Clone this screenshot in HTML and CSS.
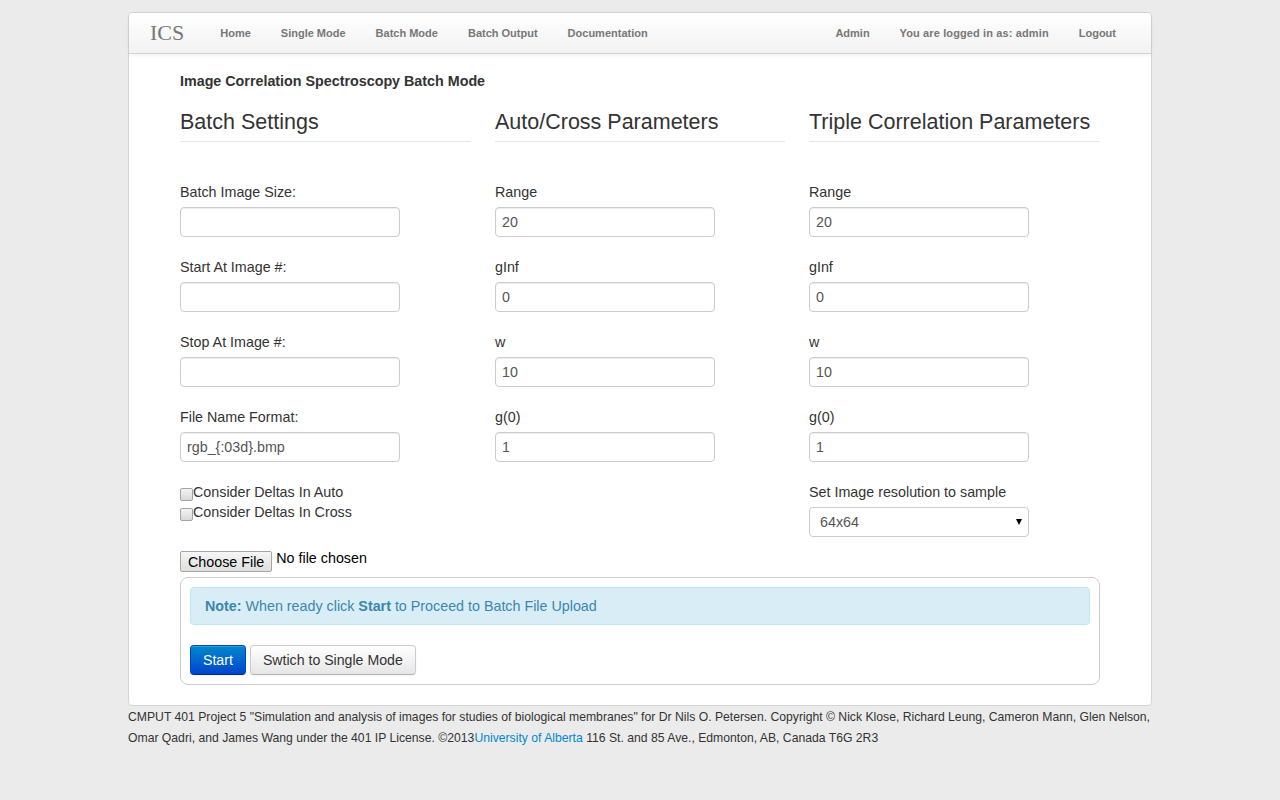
FILE: index.html
```html
<!DOCTYPE html>
<html>
<head>
<meta charset="utf-8">
<title>ICS Batch Mode</title>
<link rel="stylesheet" href="styles.css">
</head>
<body>
<div class="page">
  <div class="main">
    <div class="navbar">
      <a class="brand" href="#">ICS</a>
      <ul class="nav">
        <li><a href="#">Home</a></li>
        <li><a href="#">Single Mode</a></li>
        <li><a href="#">Batch Mode</a></li>
        <li><a href="#">Batch Output</a></li>
        <li><a href="#">Documentation</a></li>
      </ul>
      <ul class="nav nav-right">
        <li><a href="#">Admin</a></li>
        <li><a class="wide" href="#">You are logged in as: admin</a></li>
        <li><a href="#">Logout</a></li>
      </ul>
    </div>
    <div class="content">
      <h4 class="title">Image Correlation Spectroscopy Batch Mode</h4>
      <div class="columns">
        <div class="col">
          <h3 class="col-head">Batch Settings</h3>
          <div class="group"><label>Batch Image Size:</label><input type="text" value=""></div>
          <div class="group"><label>Start At Image #:</label><input type="text" value=""></div>
          <div class="group"><label>Stop At Image #:</label><input type="text" value=""></div>
          <div class="group"><label>File Name Format:</label><input type="text" value="rgb_{:03d}.bmp"></div>
          <div class="checks">
            <label class="check"><input type="checkbox">Consider Deltas In Auto</label>
            <label class="check"><input type="checkbox">Consider Deltas In Cross</label>
          </div>
        </div>
        <div class="col">
          <h3 class="col-head">Auto/Cross Parameters</h3>
          <div class="group"><label>Range</label><input type="text" value="20"></div>
          <div class="group"><label>gInf</label><input type="text" value="0"></div>
          <div class="group"><label>w</label><input type="text" value="10"></div>
          <div class="group"><label>g(0)</label><input type="text" value="1"></div>
        </div>
        <div class="col">
          <h3 class="col-head">Triple Correlation Parameters</h3>
          <div class="group"><label>Range</label><input type="text" value="20"></div>
          <div class="group"><label>gInf</label><input type="text" value="0"></div>
          <div class="group"><label>w</label><input type="text" value="10"></div>
          <div class="group"><label>g(0)</label><input type="text" value="1"></div>
          <div class="group last"><label>Set Image resolution to sample</label>
            <div class="select-wrap"><select><option>64x64</option><option>128x128</option><option>256x256</option></select></div>
          </div>
        </div>
      </div>
      <div class="file-row"><span class="file-btn">Choose File</span><span class="file-text">No file chosen</span></div>
      <div class="action-box">
        <div class="alert"><strong>Note:</strong> When ready click <strong>Start</strong> to Proceed to Batch File Upload</div>
        <div class="buttons">
          <button class="btn btn-primary">Start</button>
          <button class="btn">Swtich to Single Mode</button>
        </div>
      </div>
    </div>
  </div>
  <footer class="footer">CMPUT 401 Project 5 "Simulation and analysis of images for studies of biological membranes" for Dr Nils O. Petersen. Copyright © Nick Klose, Richard Leung, Cameron Mann, Glen Nelson,<br>Omar Qadri, and James Wang under the 401 IP License. ©2013<a href="#">University of Alberta</a> 116 St. and 85 Ave., Edmonton, AB, Canada T6G 2R3</footer>
</div>
</body>
</html>
```

FILE: styles.css
```css
html, body {
  margin: 0;
  padding: 0;
}
body {
  background: #ebebeb;
  font-family: "Liberation Sans", Arial, sans-serif;
  font-size: 14.3px;
  color: #333;
}
.page {
  width: 1024px;
  margin: 12px auto 0;
}
.main {
  background: #fff;
  border: 1px solid #d4d4d4;
  border-radius: 4px;
  box-sizing: border-box;
}
.navbar {
  display: flex;
  align-items: center;
  height: 40px;
  background: linear-gradient(#ffffff, #f2f2f2);
  border-bottom: 1px solid #d4d4d4;
  border-radius: 4px 4px 0 0;
  box-shadow: 0 1px 4px rgba(0,0,0,0.065);
}
.brand {
  font-family: "Liberation Serif", "Times New Roman", serif;
  font-size: 22px;
  color: #777;
  text-decoration: none;
  padding: 0 21px 0 20px;
  margin-left: 1px;
}
.nav {
  display: flex;
  list-style: none;
  margin: 0;
  padding: 0;
}
.nav a {
  display: block;
  padding: 0 15px;
  font-size: 11px;
  font-weight: bold;
  color: #777;
  text-decoration: none;
  line-height: 40px;
}
.nav a.wide {
  letter-spacing: 0.12px;
}
.nav-right {
  margin-left: auto;
  margin-right: 20px;
}
.content {
  padding: 0 51px 20px 51px;
}
.title {
  margin: 0;
  padding-top: 17px;
  font-size: 14.3px;
  font-weight: bold;
  line-height: 20px;
  color: #333;
}
.columns {
  display: grid;
  grid-template-columns: 291px 290px 291px;
  column-gap: 24px;
}
.col {
  display: flex;
  flex-direction: column;
}
.col-head {
  margin: 18px 0 40px;
  font-size: 21.5px;
  font-weight: normal;
  line-height: 26px;
  padding-bottom: 6px;
  border-bottom: 1px solid #e5e5e5;
  color: #333;
}
.group {
  display: flex;
  flex-direction: column;
  margin-bottom: 20px;
}
.group.last {
  margin-bottom: 14px;
}
.group label {
  line-height: 20px;
  margin-bottom: 5px;
}
.group input, .group select {
  width: 220px;
  height: 30px;
  box-sizing: border-box;
  border: 1px solid #ccc;
  border-radius: 4px;
  padding: 4px 6px;
  font-family: "Liberation Sans", Arial, sans-serif;
  font-size: 14.3px;
  color: #555;
  background: #fff;
  box-shadow: inset 0 1px 1px rgba(0,0,0,0.075);
  outline: none;
}
.select-wrap {
  position: relative;
  width: 220px;
}
.group select {
  appearance: none;
  -webkit-appearance: none;
  padding-left: 10px;
  box-shadow: none;
}
.select-wrap::after {
  content: "";
  position: absolute;
  right: 7px;
  top: 12px;
  border-left: 3.5px solid transparent;
  border-right: 3.5px solid transparent;
  border-top: 6px solid #000;
  pointer-events: none;
}
.checks {
  display: flex;
  flex-direction: column;
  margin-top: 0;
}
.check {
  display: flex;
  align-items: center;
  line-height: 20px;
}
.check input {
  appearance: none;
  -webkit-appearance: none;
  box-sizing: border-box;
  width: 13px;
  height: 13px;
  margin: 5px 0 0 0;
  border: 1px solid #a3a3a3;
  border-radius: 2px;
  background: linear-gradient(#f3f3f3, #d9d9d9);
}
.file-row {
  display: flex;
  align-items: flex-start;
  height: 26px;
}
.file-btn {
  display: inline-block;
  box-sizing: border-box;
  height: 21px;
  padding: 0 7px;
  line-height: 20px;
  font-size: 14.3px;
  color: #000;
  background: linear-gradient(#f6f6f6, #dedede);
  border: 1px solid #a6a6a6;
  border-radius: 2px;
}
.file-text {
  margin-left: 4px;
  line-height: 14px;
  color: #000;
}
.action-box {
  border: 1px solid #ccc;
  border-radius: 8px;
  padding: 9px 9px 9px;
}
.alert {
  background: #d9edf7;
  border: 1px solid #bce8f1;
  border-radius: 4px;
  color: #3a87ad;
  padding: 9px 14px;
  line-height: 18px;
}
.buttons {
  display: flex;
  gap: 4px;
  margin-top: 20px;
}
.btn {
  font-family: "Liberation Sans", Arial, sans-serif;
  font-size: 14.15px;
  height: 30px;
  padding: 0 12px;
  color: #333;
  background: linear-gradient(#ffffff, #e6e6e6);
  border: 1px solid #cccccc;
  border-bottom-color: #b3b3b3;
  border-radius: 4px;
  box-shadow: inset 0 1px 0 rgba(255,255,255,0.2), 0 1px 2px rgba(0,0,0,0.05);
}
.btn-primary {
  color: #fff;
  background: linear-gradient(#0088cc, #0044cc);
  border-color: #0044cc #0044cc #002a80;
}
.footer {
  padding-top: 1px;
  font-size: 12.2px;
  line-height: 21px;
  color: #333;
  white-space: nowrap;
}
.footer a {
  color: #0088cc;
  text-decoration: none;
}
```
